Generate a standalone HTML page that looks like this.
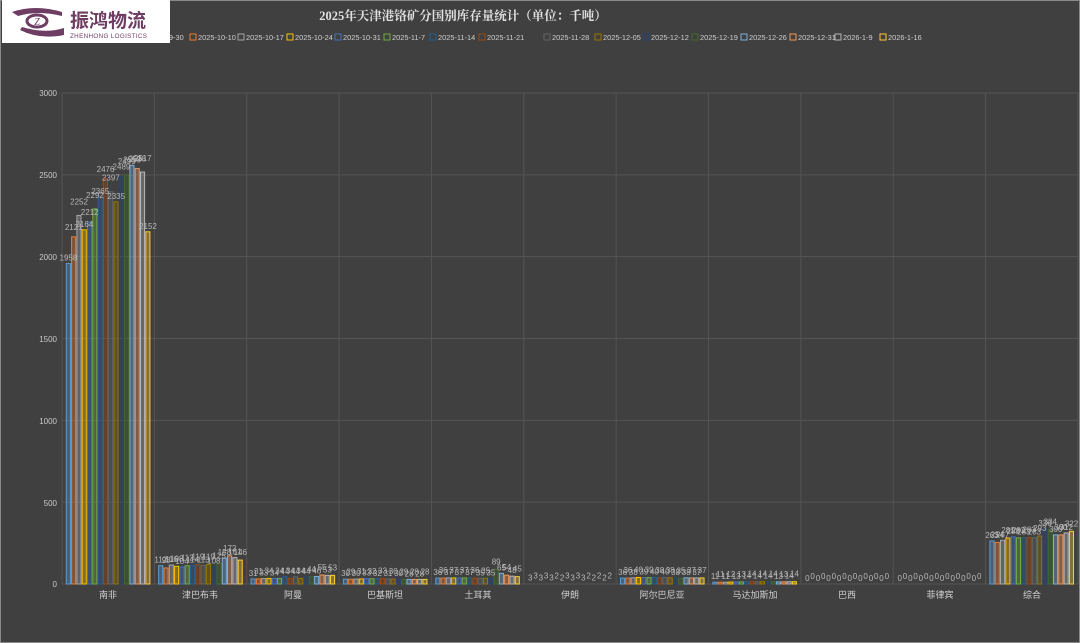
<!DOCTYPE html>
<html><head><meta charset="utf-8"><style>
html,body{margin:0;padding:0;background:#404040;}
body{width:1080px;height:643px;overflow:hidden;position:relative;font-family:"Liberation Sans","Noto Sans CJK SC",sans-serif;}
svg{position:absolute;left:0;top:0;}
</style></head><body>
<svg id="c" width="1080" height="643" viewBox="0 0 1080 643" xmlns="http://www.w3.org/2000/svg">
<rect x="0" y="0" width="1080" height="643" fill="#404040"/>
<rect x="0.5" y="0.5" width="1079" height="642" fill="none" stroke="#8a8a8a" stroke-width="1"/>
<text x="463" y="20" text-anchor="middle" font-family="'Liberation Serif','Noto Serif CJK SC',serif" font-weight="bold" font-size="12.5" fill="#e2e2e2">2025年天津港铬矿分国别库存量统计（单位：千吨）</text>
<g id="legend" font-size="7.4" fill="#cfcfcf"></g>
<g id="grid"></g>
<g id="bars"></g>
<g id="labels" font-size="8" fill="#b8b8b8" text-anchor="middle"></g>
<g font-size="8" fill="#c8c8c8" text-anchor="end">
<text x="57" y="96">3000</text><text x="57" y="178">2500</text><text x="57" y="260">2000</text><text x="57" y="342">1500</text><text x="57" y="424">1000</text><text x="57" y="506">500</text><text x="57" y="587">0</text>
</g>
<g font-size="9" fill="#cfcfcf" text-anchor="middle">
<text x="108" y="598">南非</text><text x="200" y="598">津巴布韦</text><text x="293" y="598">阿曼</text><text x="385" y="598">巴基斯坦</text><text x="478" y="598">土耳其</text><text x="570" y="598">伊朗</text><text x="662" y="598">阿尔巴尼亚</text><text x="755" y="598">马达加斯加</text><text x="847" y="598">巴西</text><text x="940" y="598">菲律宾</text><text x="1032" y="598">综合</text>
</g>
<rect x="2" y="0" width="168" height="43" fill="#ffffff"/>
<path d="M12 12 Q35 4 62 12 L62 16 Q38 10 18 16 Z" fill="#6e3d63"/>
<path d="M22 27 Q45 34 64 28 L64 35 Q40 40 20 30 Z" fill="#6e3d63"/>
<ellipse cx="37" cy="21" rx="10" ry="6" fill="none" stroke="#6e3d63" stroke-width="3"/>
<text x="37" y="25" text-anchor="middle" font-size="10" font-style="italic" fill="#6e3d63" font-family="'Liberation Serif',serif">Z</text>
<text x="70" y="27" font-size="19" font-weight="bold" fill="#6e3d63" font-family="'Noto Sans CJK SC',sans-serif">振鸿物流</text>
<text x="70" y="38" font-size="6.3" fill="#6e3d63" textLength="77">ZHENHONG LOGISTICS</text>
</svg>
<script>
var C=["#5B9BD5","#ED7D31","#A5A5A5","#FFC000","#4472C4","#70AD47","#255E91","#9E480E","#636363","#997300","#264478","#43682B","#7CAFDD","#F1975A","#B7B7B7","#FFCD33"];
var N=["2025-9-30","2025-10-10","2025-10-17","2025-10-24","2025-10-31","2025-11-7","2025-11-14","2025-11-21","2025-11-28","2025-12-05","2025-12-12","2025-12-19","2025-12-26","2025-12-31","2026-1-9","2026-1-16"];
var LX=[142,190,238,287,335,384,430,479,544,595,643,692,741,790,835,880];
var D=[
[1958,2121,2252,2164,2212,2292,2365,2476,2397,2335,2489,2499,2558,2538,2517,2152],
[112,98,116,108,104,112,114,119,113,119,108,125,158,172,161,146],
[31,31,33,34,34,34,44,34,44,34,44,44,46,55,53,53],
[30,29,30,31,33,32,32,33,31,30,30,29,28,28,28,28],
[36,36,37,37,37,37,37,36,35,35,35,89,65,54,48,45],
[3,3,3,3,3,2,2,3,3,3,3,2,2,2,2,2],
[36,36,38,40,39,39,40,38,40,38,38,35,38,37,37,37],
[11,11,11,12,13,13,14,14,14,14,14,14,13,13,14,14],
[0,0,0,0,0,0,0,0,0,0,0,0,0,0,0,0],
[0,0,0,0,0,0,0,0,0,0,0,0,0,0,0,0],
[263,254,267,281,288,282,283,283,283,293,336,334,300,300,312,322]];
var ns="http://www.w3.org/2000/svg";
function el(t,a,p,txt){var e=document.createElementNS(ns,t);for(var k in a)e.setAttribute(k,a[k]);if(txt!==undefined)e.textContent=txt;document.getElementById(p).appendChild(e);}
for(var i=0;i<16;i++){el("rect",{x:LX[i],y:34,width:6,height:6,fill:"none",stroke:C[i],"stroke-width":1},"legend");el("text",{x:LX[i]+8,y:40},"legend",N[i]);}
var y0=584,sc=491/3000,x0=62,W=92.36;
for(var g=0;g<=6;g++){var y=y0-g*500*sc;el("line",{x1:x0,x2:1078,y1:y,y2:y,stroke:"#545454","stroke-width":1},"grid");}
for(var k=0;k<=11;k++){var x=x0+k*W;el("line",{x1:x,x2:x,y1:93,y2:y0,stroke:"#545454","stroke-width":1},"grid");}
var bw=5.3,off=3.8;
for(var c=0;c<11;c++)for(var s=0;s<16;s++){var v=D[c][s],h=v*sc,x=x0+c*W+off+s*bw;
if(h>0.5)el("rect",{x:x+0.5,y:y0-h,width:bw-1.2,height:h,fill:C[s],"fill-opacity":0.35,stroke:C[s],"stroke-width":1},"bars");
el("text",{x:x+bw/2,y:y0-h-3-(c==0?(s%3)*4:(s%2)*2)},"labels",String(v));}
</script>
</body></html>
